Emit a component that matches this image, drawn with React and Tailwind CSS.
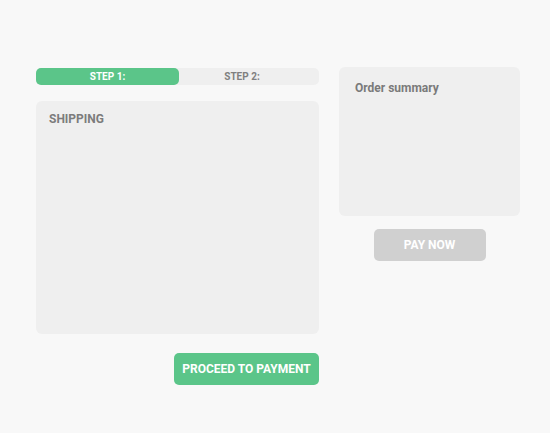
export default function App() {
  return (
    <div className="h-[433px] w-[550px] bg-[#f8f8f8] pl-[36px] pt-[67px] flex gap-[20px]" style={{ fontFamily: "Roboto, 'Liberation Sans', sans-serif" }}>
      <div className="w-[283px] flex flex-col">
        <div className="mt-[1px] h-[17px] rounded-[5px] bg-[#efefef] flex text-[10px] font-bold leading-[17px]">
          <div className="w-[143px] rounded-[5px] bg-[#5bc589] text-white text-center">STEP 1:</div>
          <div className="flex-1 pr-[14px] text-center text-[#808080]">STEP 2:</div>
        </div>
        <div className="mt-[16px] h-[233px] rounded-[6px] bg-[#efefef] px-[13px] pt-[9px] text-[12px] font-bold text-[#7c7c7c]">
          SHIPPING
        </div>
        <div className="mt-[19px] flex justify-end">
          <button className="h-[32px] w-[145px] rounded-[5px] bg-[#5bc589] text-white text-[12px] font-bold">PROCEED TO PAYMENT</button>
        </div>
      </div>
      <div className="w-[181px] flex flex-col items-center">
        <div className="w-full h-[149px] rounded-[6px] bg-[#efefef] px-[16px] pt-[12px] text-[12px] font-bold text-[#7a7a7a]">
          Order summary
        </div>
        <button className="mt-[13px] h-[32px] w-[112px] rounded-[5px] bg-[#d0d0d0] text-white text-[12px] font-bold">PAY NOW</button>
      </div>
    </div>
  );
}
